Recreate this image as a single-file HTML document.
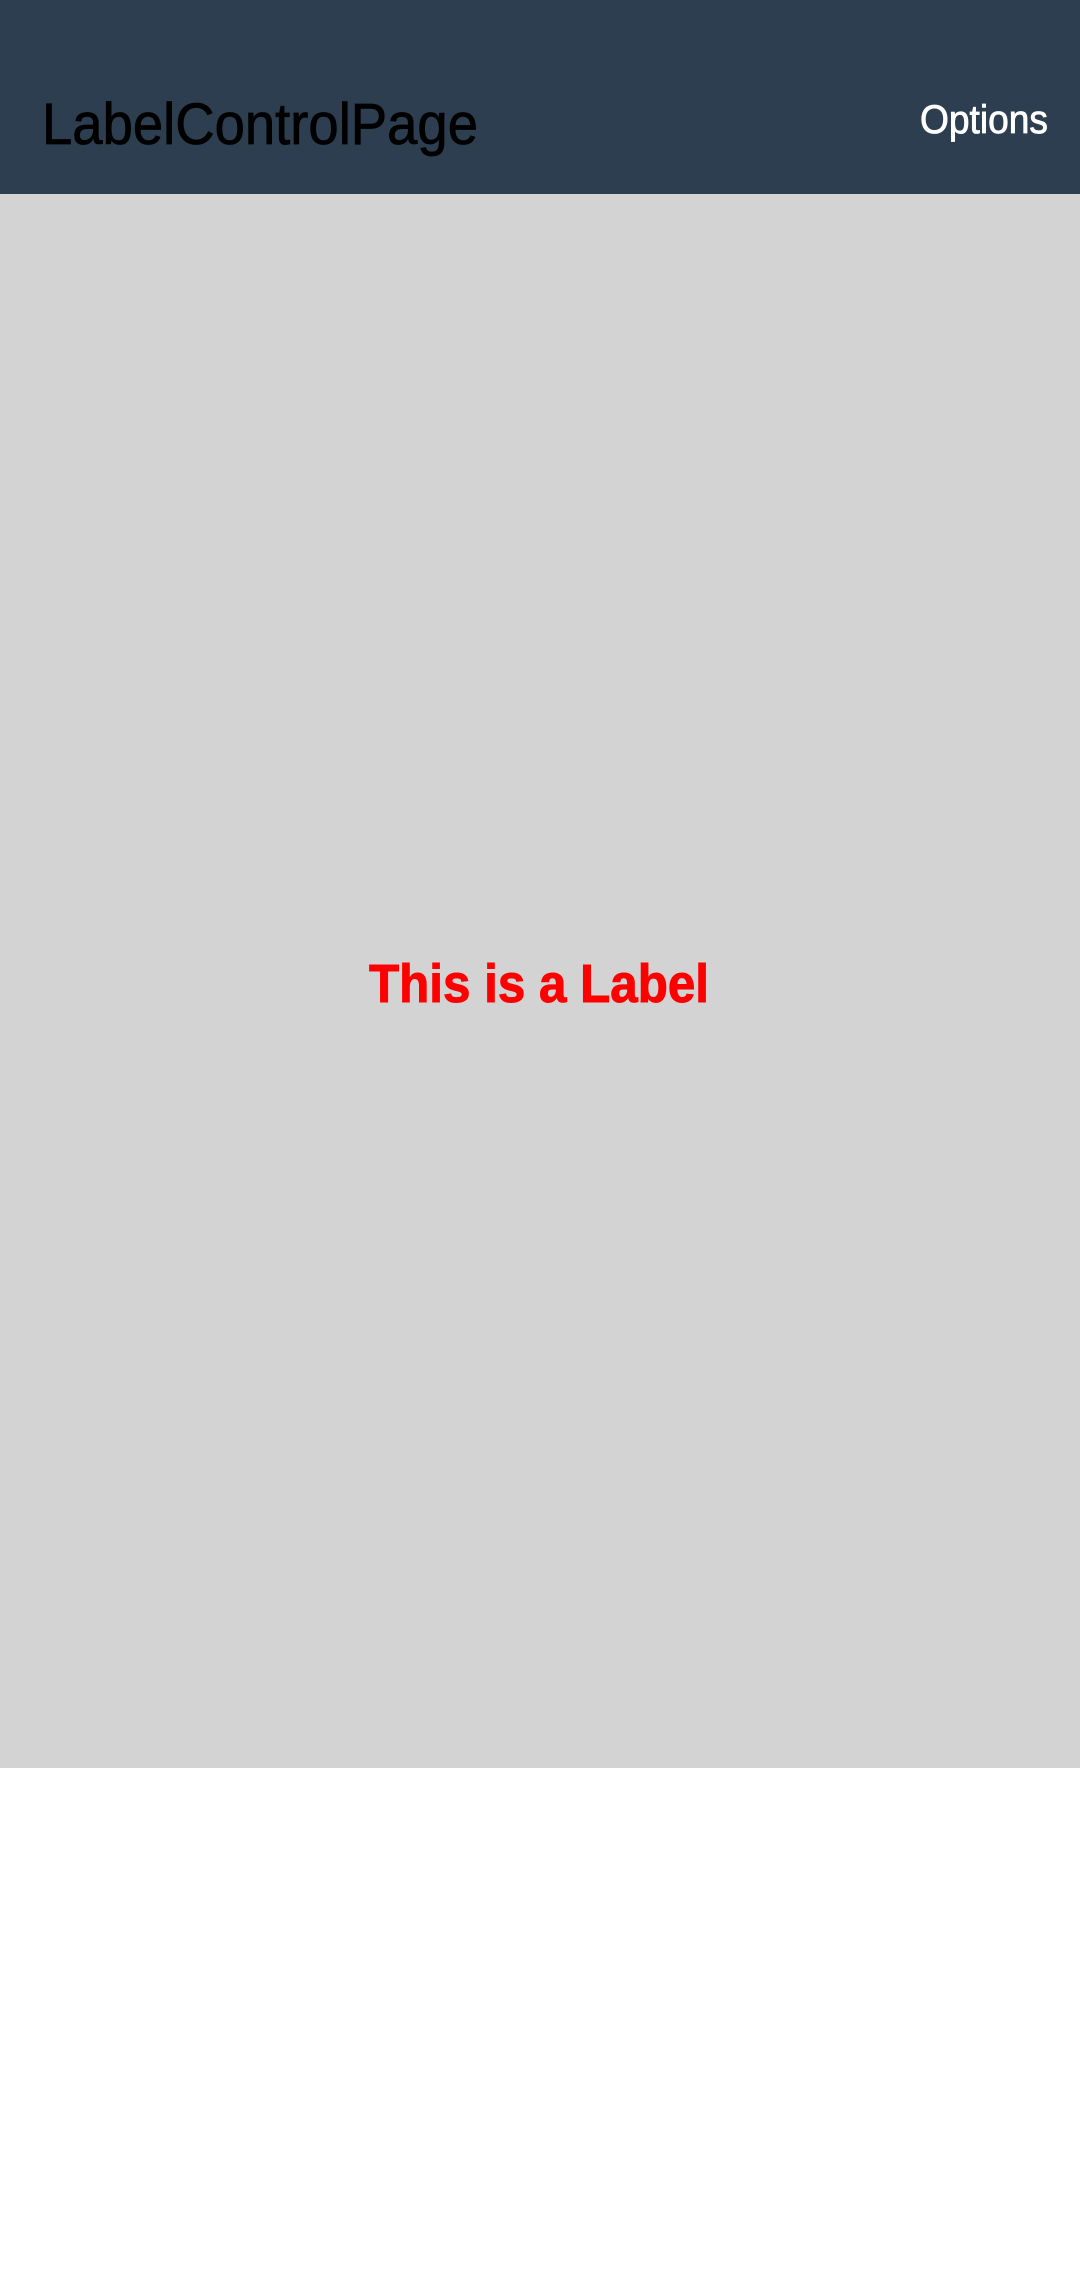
<!DOCTYPE html>
<html><head><meta charset="utf-8"><style>
html,body{margin:0;padding:0;width:1080px;height:2289px;background:#fff;overflow:hidden}
svg{display:block}
</style></head><body>
<svg width="1080" height="2289" xmlns="http://www.w3.org/2000/svg">
<rect x="0" y="0" width="1080" height="194" fill="#2c3e50"/>
<rect x="0" y="194" width="1080" height="1574" fill="#d3d3d3"/>
<text x="42" y="144" font-family="Liberation Sans, sans-serif" font-size="58" fill="#000" stroke="#000" stroke-width="0.8" textLength="436" lengthAdjust="spacingAndGlyphs">LabelControlPage</text>
<text x="920" y="133" font-family="Liberation Sans, sans-serif" font-size="40" fill="#fff" stroke="#fff" stroke-width="0.8" textLength="128" lengthAdjust="spacingAndGlyphs">Options</text>
<text x="369" y="1002" font-family="Liberation Sans, sans-serif" font-weight="bold" font-size="54" fill="#ff0000" stroke="#ff0000" stroke-width="1" textLength="340" lengthAdjust="spacingAndGlyphs">This is a Label</text>
</svg>
</body></html>
